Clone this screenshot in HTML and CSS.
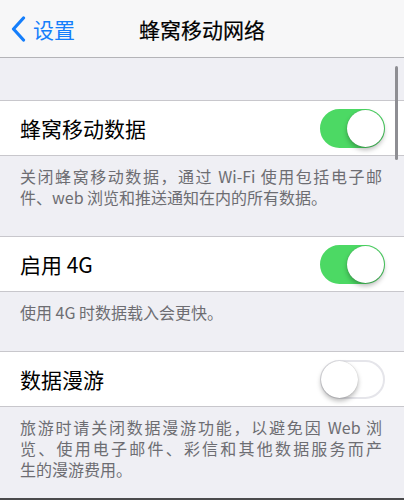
FILE: index.html
```html
<!DOCTYPE html>
<html lang="zh-CN">
<head>
    <meta charset="UTF-8">
    <meta name="viewport" content="width=device-width, initial-scale=1.0">
    <title>蜂窝移动网络</title>
    <link rel="stylesheet" href="styles.css">
</head>
<body>
    <div class="screen">
        <div class="navbar">
            <a class="back" href="#">
                <svg class="chevron" viewBox="0 0 15 26" width="15" height="26">
                    <path d="M12.5 2 L2.5 13 L12.5 24" fill="none" stroke="#157efb" stroke-width="3.2" stroke-linecap="round" stroke-linejoin="round"/>
                </svg>
                <span>设置</span>
            </a>
            <div class="title">蜂窝移动网络</div>
            <div></div>
        </div>

        <div class="content">
            <!-- 蜂窝移动数据 -->
            <div class="group">
                <div class="cell">
                    <span class="label">蜂窝移动数据</span>
                    <span class="switch on"></span>
                </div>
                <div class="note">
                    <span class="line">关闭蜂窝移动数据，通过 Wi-Fi 使用包括电子邮</span>
                    <span class="last">件、web 浏览和推送通知在内的所有数据。</span>
                </div>
            </div>

            <!-- 4G -->
            <div class="group">
                <div class="cell">
                    <span class="label">启用 4G</span>
                    <span class="switch on"></span>
                </div>
                <div class="note">
                    <span class="last">使用 4G 时数据载入会更快。</span>
                </div>
            </div>

            <!-- 漫游 -->
            <div class="group">
                <div class="cell">
                    <span class="label">数据漫游</span>
                    <span class="switch"></span>
                </div>
                <div class="note">
                    <span class="line">旅游时请关闭数据漫游功能，以避免因 Web 浏</span>
                    <span class="line">览、使用电子邮件、彩信和其他数据服务而产</span>
                    <span class="last">生的漫游费用。</span>
                </div>
            </div>

            <div class="scrollbar"></div>
        </div>
        <div class="edge"></div>
    </div>
</body>
</html>
```

FILE: styles.css
```css
body {
    margin: 0;
    padding: 0;
    font-family: "Noto Sans CJK SC", "Noto Sans", sans-serif;
    background-color: #efeff4;
    color: #000;
}

.screen {
    display: flex;
    flex-direction: column;
    height: 500px;
    overflow: hidden;
}

/* barra de navegação */
.navbar {
    display: grid;
    grid-template-columns: 1fr auto 1fr;
    align-items: center;
    height: 57px;
    flex-shrink: 0;
    background-color: #f7f7f8;
    border-bottom: 1px solid #b4b4b8;
}

.back {
    display: flex;
    align-items: center;
    gap: 7px;
    padding-left: 11px;
    padding-top: 1px;
    color: #157efb;
    text-decoration: none;
    font-size: 21px;
}

.chevron {
    display: block;
}

.title {
    font-size: 21px;
    font-weight: 400;
    -webkit-text-stroke: 0.2px #000;
}

.content {
    flex: 1;
    position: relative;
    padding-top: 42px;
    overflow: hidden;
}

.cell {
    display: flex;
    align-items: center;
    justify-content: space-between;
    height: 54px;
    padding: 0 20px;
    background-color: #fff;
    border-top: 1px solid #c8c7cc;
    border-bottom: 1px solid #c8c7cc;
}

.group + .group .cell {
    border-top-width: 1px;
}

.label {
    font-size: 21px;
}

.note {
    padding: 10px 22px 28px 20px;
    font-size: 16px;
    line-height: 21px;
    color: #6d6d72;
}

.note .line,
.note .last {
    display: block;
    height: 21px;
}

.note .line {
    text-align: justify;
    text-align-last: justify;
}

/* interruptor */
.switch {
    position: relative;
    width: 61px;
    height: 35px;
    margin-right: -1px;
    border-radius: 20px;
    border: 2px solid #e5e5ea;
    background-color: #fff;
}

.switch::after {
    content: "";
    position: absolute;
    top: -1px;
    left: -1px;
    width: 37px;
    height: 37px;
    border-radius: 50%;
    background-color: #fff;
    box-shadow: 0 3px 5px rgba(0, 0, 0, 0.28), 0 0 1px rgba(0, 0, 0, 0.25);
}

.switch.on {
    background-color: #4cd964;
    border-color: #4cd964;
}

.switch.on::after {
    left: auto;
    right: -1px;
}

.scrollbar {
    position: absolute;
    top: 8px;
    right: 6px;
    width: 3px;
    height: 94px;
    border-radius: 2px;
    background-color: #8e8e93;
}

.edge {
    height: 2px;
    flex-shrink: 0;
    background-color: #4a4a4c;
}
```
